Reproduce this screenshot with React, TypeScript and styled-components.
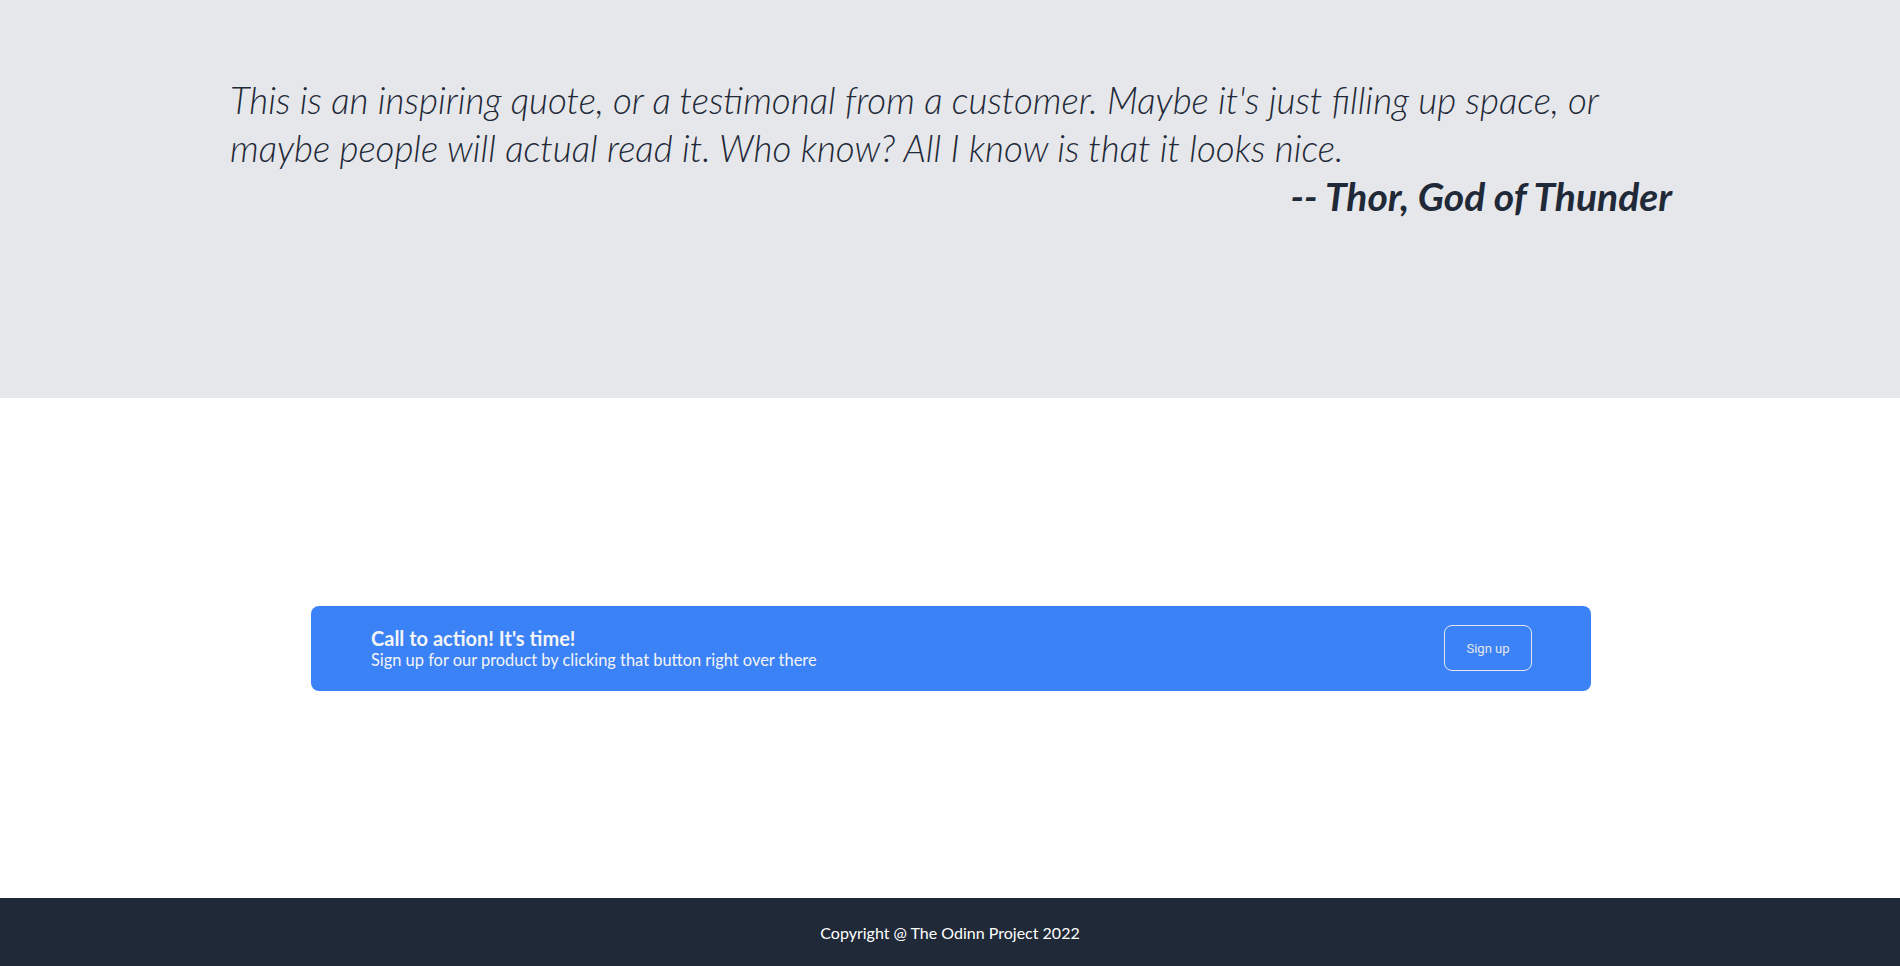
import React from "react";
import styled, { createGlobalStyle } from "styled-components";

const Global = createGlobalStyle`
  html, body { margin: 0; padding: 0; }
  body { font-family: Lato, "Open Sans", sans-serif; background: #ffffff; color: #1f2937; }
  * { box-sizing: border-box; }
`;

const Page = styled.div`
  display: flex;
  flex-direction: column;
  min-height: 966px;
`;

const QuoteSection = styled.section`
  background: #e5e7eb;
  height: 398px;
  padding-top: 76px;
`;

const QuoteContainer = styled.div`
  max-width: 1440px;
  margin: 0 auto;
  display: flex;
  flex-direction: column;
`;

const QuoteText = styled.p`
  margin: 0;
  font-family: Lato, sans-serif;
  font-style: italic;
  font-weight: 300;
  font-size: 36.75px;
  line-height: 48px;
  color: #1f2937;
  max-width: 1400px;
`;

const Author = styled.p`
  margin: 0 -2px 0 0;
  align-self: flex-end;
  font-family: Lato, sans-serif;
  font-style: italic;
  font-weight: 700;
  font-size: 39px;
  line-height: 48px;
  color: #1f2937;
`;

const Middle = styled.main`
  height: 500px;
  display: flex;
  align-items: center;
  justify-content: center;
`;

const CtaBox = styled.div`
  width: 1280px;
  height: 85px;
  margin-left: 2px;
  background: #3b82f6;
  border-radius: 8px;
  padding: 0 59px 0 60px;
  display: flex;
  align-items: center;
  justify-content: space-between;
`;

const CtaText = styled.div`
  display: flex;
  flex-direction: column;
  color: #f3f4f6;
`;

const CtaTitle = styled.div`
  font-family: Lato, sans-serif;
  font-weight: 700;
  font-size: 20px;
  line-height: 23px;
`;

const CtaSub = styled.div`
  font-family: Lato, sans-serif;
  font-size: 16.4px;
  line-height: 20px;
`;

const SignUp = styled.button`
  width: 88px;
  height: 46px;
  background: transparent;
  border: 1px solid #e5e7eb;
  border-radius: 8px;
  color: #e5e7eb;
  font-family: Roboto, Arial, sans-serif;
  font-size: 13px;
  cursor: pointer;
`;

const Footer = styled.footer`
  height: 68px;
  background: #1f2937;
  color: #ffffff;
  display: flex;
  align-items: center;
  justify-content: center;
  font-family: Lato, sans-serif;
  font-size: 16px;
`;

export default function App() {
  return (
    <>
      <Global />
      <Page>
        <QuoteSection>
          <QuoteContainer>
            <QuoteText>
              This is an inspiring quote, or a testimonal from a customer. Maybe it's just filling up space, or maybe
              people will actual read it. Who know? All I know is that it looks nice.
            </QuoteText>
            <Author>-- Thor, God of Thunder</Author>
          </QuoteContainer>
        </QuoteSection>
        <Middle>
          <CtaBox>
            <CtaText>
              <CtaTitle>Call to action! It's time!</CtaTitle>
              <CtaSub>Sign up for our product by clicking that button right over there</CtaSub>
            </CtaText>
            <SignUp>Sign up</SignUp>
          </CtaBox>
        </Middle>
        <Footer>Copyright @ The Odinn Project 2022</Footer>
      </Page>
    </>
  );
}
